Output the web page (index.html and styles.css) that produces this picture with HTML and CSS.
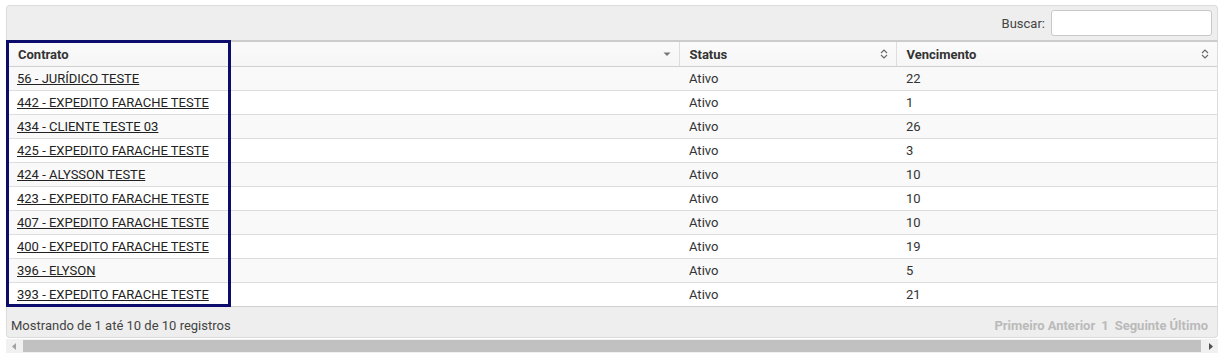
FILE: index.html
```html
<!DOCTYPE html>
<html lang="pt">
<head>
<meta charset="utf-8">
<link rel="stylesheet" href="styles.css">
</head>
<body>
<div class="wrap">
  <div class="toolbar top">
    <label class="search">Buscar: <input type="text"></label>
  </div>
  <div class="tablebox">
    <table class="grid">
      <colgroup><col class="c1"><col class="c2"><col class="c3"></colgroup>
      <thead>
        <tr>
          <th><span>Contrato</span><svg class="ic" width="8" height="6" viewBox="0 0 8 6"><path d="M0.5 1.5h7L4 5z" fill="#777"/></svg></th>
          <th><span>Status</span><svg class="ic" width="8" height="11" viewBox="0 0 8 11"><path d="M1 4.5L4 1.5 7 4.5M1 6.5L4 9.5 7 6.5" fill="none" stroke="#666" stroke-width="1.1"/></svg></th>
          <th><span>Vencimento</span><svg class="ic" width="8" height="11" viewBox="0 0 8 11"><path d="M1 4.5L4 1.5 7 4.5M1 6.5L4 9.5 7 6.5" fill="none" stroke="#666" stroke-width="1.1"/></svg></th>
        </tr>
      </thead>
      <tbody>
        <tr><td><a href="#">56 - JURÍDICO TESTE</a></td><td>Ativo</td><td>22</td></tr>
        <tr><td><a href="#">442 - EXPEDITO FARACHE TESTE</a></td><td>Ativo</td><td>1</td></tr>
        <tr><td><a href="#">434 - CLIENTE TESTE 03</a></td><td>Ativo</td><td>26</td></tr>
        <tr><td><a href="#">425 - EXPEDITO FARACHE TESTE</a></td><td>Ativo</td><td>3</td></tr>
        <tr><td><a href="#">424 - ALYSSON TESTE</a></td><td>Ativo</td><td>10</td></tr>
        <tr><td><a href="#">423 - EXPEDITO FARACHE TESTE</a></td><td>Ativo</td><td>10</td></tr>
        <tr><td><a href="#">407 - EXPEDITO FARACHE TESTE</a></td><td>Ativo</td><td>10</td></tr>
        <tr><td><a href="#">400 - EXPEDITO FARACHE TESTE</a></td><td>Ativo</td><td>19</td></tr>
        <tr><td><a href="#">396 - ELYSON</a></td><td>Ativo</td><td>5</td></tr>
        <tr><td><a href="#">393 - EXPEDITO FARACHE TESTE</a></td><td>Ativo</td><td>21</td></tr>
      </tbody>
    </table>
    <div class="highlight"></div>
  </div>
  <div class="toolbar bottom">
    <div class="info">Mostrando de 1 até 10 de 10 registros</div>
    <div class="pager"><span>Primeiro</span><span>Anterior</span><span class="num">1</span><span>Seguinte</span><span>Último</span></div>
  </div>
  <div class="hscroll">
    <div class="arrow"><svg width="4" height="7" viewBox="0 0 4 7"><path d="M4 0v7L0 3.5z" fill="#a3a3a3"/></svg></div>
    <div class="thumb"></div>
    <div class="arrow"><svg width="4" height="7" viewBox="0 0 4 7"><path d="M0 0v7L4 3.5z" fill="#505050"/></svg></div>
  </div>
</div>
</body>
</html>
```
FILE: styles.css
```css
html, body {
  margin: 0;
  padding: 0;
  background: #fff;
}
body {
  font-family: Roboto, "Liberation Sans", Arial, sans-serif;
  font-size: 13px;
  color: #333;
}
.wrap {
  width: 1212px;
  margin: 5px 0 0 6px;
}
.toolbar {
  background: #eeeeee;
  border: 1px solid #dcdcdc;
  display: flex;
  align-items: center;
  box-sizing: border-box;
}
.toolbar.top {
  height: 37px;
  border-radius: 4px 4px 0 0;
  border-bottom: 2px solid #cccccc;
  justify-content: flex-end;
  padding-right: 5px;
}
.search {
  display: flex;
  align-items: center;
  gap: 6px;
  color: #444;
}
.search input {
  width: 161px;
  height: 26px;
  box-sizing: border-box;
  border: 1px solid #c8c8c8;
  border-radius: 3px;
  background: #fff;
  margin: 0;
  padding: 0 4px;
  outline: none;
}
.tablebox {
  position: relative;
  border-left: 1px solid #dcdcdc;
  border-right: 1px solid #dcdcdc;
}
.grid {
  width: 1210px;
  border-collapse: collapse;
  table-layout: fixed;
}
.c1 { width: 672px; }
.c2 { width: 217px; }
.c3 { width: 321px; }
.grid th {
  position: relative;
  height: 24px;
  padding: 1px 10px 0 10px;
  text-align: left;
  font-weight: bold;
  color: #333;
  background: linear-gradient(#fafafa, #f6f6f6);
  border-bottom: 1px solid #cfcfcf;
  border-left: 1px solid #dedede;
  box-sizing: border-box;
}
.grid th:first-child { border-left: none; padding-left: 11px; }
.grid th span { vertical-align: middle; }
.grid th .ic {
  position: absolute;
  right: 8px;
  top: 50%;
  transform: translateY(-50%);
}
.grid td {
  height: 24px;
  padding: 1px 10px 0;
  border-bottom: 1px solid #dddddd;
  box-sizing: border-box;
  color: #333;
  white-space: nowrap;
}
.grid tbody tr:last-child td { border-bottom: none; }
.grid tbody tr:nth-child(odd) td { background: #f9f9f9; }
.grid tbody tr:nth-child(even) td { background: #ffffff; }
.grid td a {
  color: #222;
  text-decoration: underline;
}
.highlight {
  position: absolute;
  left: -1px;
  top: -2px;
  width: 225px;
  height: 267px;
  box-sizing: border-box;
  border: 3px solid #0c0c6c;
  pointer-events: none;
}
.toolbar.bottom {
  height: 32px;
  border-top: 1px solid #d0d0d0;
  border-radius: 0 0 4px 4px;
  justify-content: space-between;
  padding: 6px 9px 0 4px;
}
.info { color: #444; }
.pager {
  display: flex;
  gap: 3px;
  color: #bababa;
  font-weight: bold;
}
.pager .num { padding: 0 3px; }
.hscroll {
  display: flex;
  height: 14px;
  margin-top: 1px;
  background: #f1f1f1;
}
.hscroll .arrow {
  width: 15px;
  display: flex;
  align-items: center;
  justify-content: center;
}
.hscroll .thumb {
  flex: 1;
  background: #c1c1c1;
  margin: 1px 2px;
}
```
